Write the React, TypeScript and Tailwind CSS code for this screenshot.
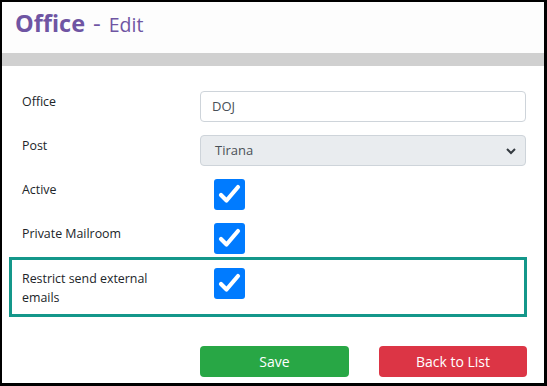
import React from "react";

const font = { fontFamily: '"Segoe UI", "Open Sans", "Noto Sans", sans-serif' };

function Check() {
  return (
    <div className="w-[31px] h-[31px] rounded-[3px] bg-[#007bff]">
      <svg width="31" height="31" viewBox="0 0 31 31">
        <polyline points="7,16 12.5,21.5 24,8" fill="none" stroke="white" strokeWidth="4.2" strokeLinecap="round" strokeLinejoin="round" />
      </svg>
    </div>
  );
}

function Row({ label, children, last }: { label: React.ReactNode; children: React.ReactNode; last?: boolean }) {
  return (
    <div className={`flex ${last ? "" : "mb-[13px]"}`}>
      <div className="w-[178px] pt-[1px] text-[12.4px] leading-[20px] text-[#212529]">{label}</div>
      <div className="w-[326px]">{children}</div>
    </div>
  );
}

export default function App() {
  return (
    <div
      className="w-[547px] h-[386px] bg-white border-black border-l-2 border-t-2 border-r-[3px] border-b-[3px] overflow-hidden"
      style={font}
    >
      <div className="h-[51px] bg-[#fdfdfd] pl-[13px] pt-[4px] flex items-baseline gap-[8px] text-[#6f55a3]">
        <span className="text-[23.5px] font-bold leading-[34px]">Office</span>
        <span className="text-[24px] leading-[34px]">-</span>
        <span className="text-[19.5px] leading-[34px]">Edit</span>
      </div>
      <div className="h-[13px] bg-[#d0d0d0]" />
      <div className="pt-[25px]">
        <div className="pl-[20px]">
          <Row label="Office">
            <div className="h-[31px] border border-[#ced4da] rounded-[4px] flex items-center pl-[11px] text-[13px] text-[#495057]">
              DOJ
            </div>
          </Row>
          <Row label="Post">
            <div className="h-[31px] border border-[#ced4da] rounded-[4px] bg-[#e9ecef] flex items-center justify-between pl-[14px] pr-[8px] text-[13px] text-[#495057]">
              <span>Tirana</span>
              <svg width="12" height="8" viewBox="0 0 12 8">
                <polyline points="2,2 6,6 10,2" fill="none" stroke="#343a40" strokeWidth="2" />
              </svg>
            </div>
          </Row>
          <Row label="Active">
            <div className="pl-[14px]"><Check /></div>
          </Row>
          <Row label="Private Mailroom" last>
            <div className="pl-[14px]"><Check /></div>
          </Row>
        </div>
        <div className="ml-[7px] mt-[3px] w-[518px] h-[60px] border-[3px] border-[#14978a] pl-[10px] pt-[8px] flex">
          <div className="w-[178px] text-[12.4px] leading-[19px] text-[#212529] pt-[1px]">
            <div className="w-[140px]">Restrict send external emails</div>
          </div>
          <div className="pl-[14px]"><Check /></div>
        </div>
        <div className="flex pl-[198px] mt-[29px] gap-[30px]">
          <div className="w-[149px] h-[31px] rounded-[4px] bg-[#28a745] text-white text-[14px] flex items-center justify-center">Save</div>
          <div className="w-[148px] h-[31px] rounded-[4px] bg-[#dc3545] text-white text-[14px] flex items-center justify-center">Back to List</div>
        </div>
      </div>
    </div>
  );
}
